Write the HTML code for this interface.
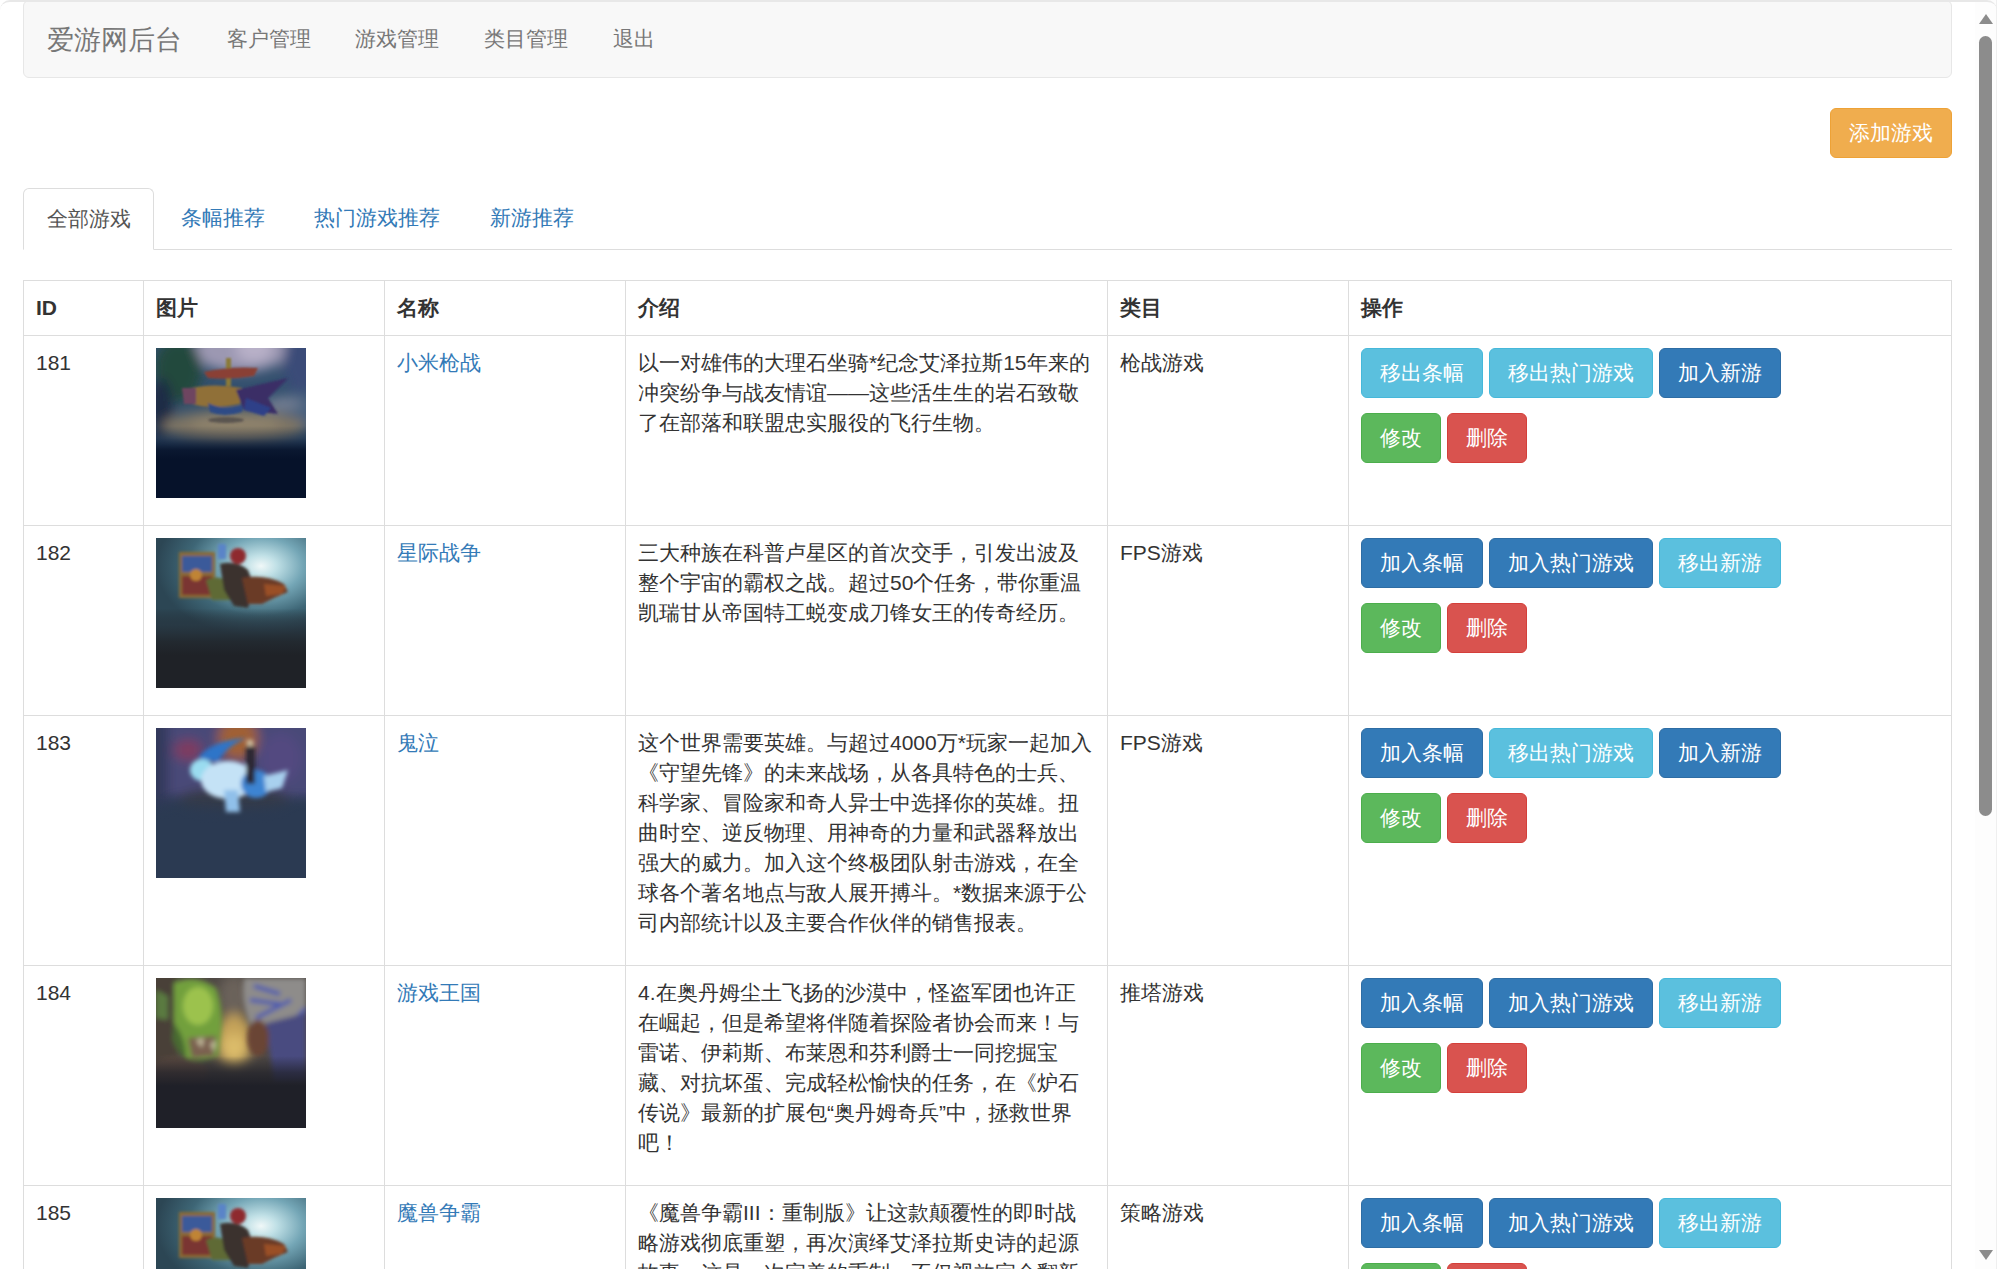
<!DOCTYPE html>
<html><head><meta charset="utf-8"><style>
html,body{margin:0;padding:0;background:#fff;overflow:hidden}
body{width:1997px;height:1269px;position:relative;font-family:"Liberation Sans",sans-serif;font-size:21px;line-height:30px;color:#333}
a{text-decoration:none;color:#337ab7}
.topline{position:absolute;left:0;top:0;width:1997px;height:40px;box-sizing:border-box;border-top:2px solid #e8e8e8;border-radius:10px 10px 0 0;z-index:5;pointer-events:none}
.navbar{position:absolute;left:23px;top:0;width:1927px;height:76px;background:#f8f8f8;border:1px solid #e7e7e7;border-radius:6px;box-sizing:content-box}
.brand{position:absolute;left:23px;top:24px;font-size:27px;line-height:30px;color:#777}
.nl{position:absolute;top:23px;font-size:21px;line-height:30px;color:#777}
.btn{display:inline-block;box-sizing:border-box;height:50px;padding:0 18px;border:1px solid;border-radius:6px;color:#fff;font-size:21px;line-height:48px;white-space:nowrap;vertical-align:top}
.warn{background:#f0ad4e;border-color:#eea236}
.info{background:#5bc0de;border-color:#46b8da}
.prim{background:#337ab7;border-color:#2e6da4}
.succ{background:#5cb85c;border-color:#4cae4c}
.dang{background:#d9534f;border-color:#d43f3a}
.addbtn{position:absolute;left:1830px;top:108px;width:122px}
.tabs{position:absolute;left:23px;top:249px;width:1929px;height:1px;background:#ddd}
.tab{position:absolute;top:188px;height:62px;box-sizing:border-box;line-height:30px;padding-top:15px;color:#337ab7}
.tab.act{background:#fff;border:1px solid #ddd;border-bottom-color:#fff;border-radius:6px 6px 0 0;color:#555}
table{position:absolute;left:23px;top:280px;border-collapse:collapse;table-layout:fixed;width:1929px}
td,th{border:1px solid #ddd;padding:12px;vertical-align:top;text-align:left;line-height:30px}
th{font-weight:bold}
td p{margin:0 0 15px 0;white-space:nowrap;overflow:visible}
.img{display:block;width:150px;height:150px;margin-bottom:15px}
.ops .btn{margin-right:6px}
.ops .r{height:50px;margin-bottom:15px;white-space:nowrap}
.sb{position:absolute;left:1975px;top:0;width:21px;height:1269px;background:#fdfdfd;border-right:1px solid #efefef}
.thumb{position:absolute;left:1979px;top:36px;width:13px;height:780px;border-radius:7px;background:#8c8c8c}
.arr{position:absolute;left:1979px;width:0;height:0;border-left:7px solid transparent;border-right:7px solid transparent}

</style></head><body>
<div class="navbar">
  <span class="brand">爱游网后台</span>
  <span class="nl" style="left:203px">客户管理</span>
  <span class="nl" style="left:331px">游戏管理</span>
  <span class="nl" style="left:460px">类目管理</span>
  <span class="nl" style="left:589px">退出</span>
</div>
<span class="btn warn addbtn">添加游戏</span>
<div class="tabs"></div>
<div class="tab act" style="left:23px;width:131px;padding-left:23px">全部游戏</div>
<div class="tab" style="left:157px;padding-left:24px">条幅推荐</div>
<div class="tab" style="left:290px;padding-left:24px">热门游戏推荐</div>
<div class="tab" style="left:466px;padding-left:24px">新游推荐</div>

<table>
<colgroup><col style="width:120px"><col style="width:241px"><col style="width:241px"><col style="width:482px"><col style="width:241px"><col style="width:603px"></colgroup>
<tr><th>ID</th><th>图片</th><th>名称</th><th>介绍</th><th>类目</th><th>操作</th></tr>
<tr><td>181</td><td><svg class="img" width="150" height="150" viewBox="0 0 150 150"><defs><filter id="b1" x="-30%" y="-30%" width="160%" height="160%"><feGaussianBlur stdDeviation="6"/></filter><filter id="s1" x="-20%" y="-20%" width="140%" height="140%"><feGaussianBlur stdDeviation="1.3"/></filter><linearGradient id="l1" x1="0" y1="0" x2="0" y2="1"><stop offset="0" stop-color="#06122a" stop-opacity="0"/><stop offset="0.52" stop-color="#06122a" stop-opacity="0"/><stop offset="0.6" stop-color="#06122a" stop-opacity="0.3"/><stop offset="0.68" stop-color="#06122a" stop-opacity="0.9"/><stop offset="0.74" stop-color="#06122a" stop-opacity="1"/><stop offset="1" stop-color="#06122a"/></linearGradient><clipPath id="c1"><rect width="150" height="150"/></clipPath></defs>
<g clip-path="url(#c1)">
<rect width="150" height="150" fill="#34506e"/>
<g filter="url(#b1)">
<ellipse cx="85" cy="2" rx="48" ry="22" fill="#9c98b2"/>
<ellipse cx="98" cy="0" rx="18" ry="14" fill="#b8b0c8"/>
<ellipse cx="145" cy="15" rx="18" ry="30" fill="#3a4c78"/>
<ellipse cx="140" cy="62" rx="30" ry="18" fill="#46607e"/>
<ellipse cx="22" cy="22" rx="24" ry="32" fill="#24483e"/>
<ellipse cx="5" cy="60" rx="12" ry="30" fill="#1c2c44"/>
<ellipse cx="78" cy="78" rx="72" ry="16" fill="#7e7464"/>
<ellipse cx="80" cy="76" rx="45" ry="9" fill="#8e826c"/>
<ellipse cx="125" cy="56" rx="22" ry="3" fill="#8e92a0"/>
</g>
<rect width="150" height="150" fill="url(#l1)"/>
<g filter="url(#s1)">
<rect x="70" y="10" width="5" height="28" fill="#8a7a38"/>
<path d="M48 24 Q75 18 102 20 L98 28 Q75 32 52 30 Z" fill="#8a4034"/>
<path d="M26 42 Q55 34 86 40 L84 56 Q55 62 36 56 Z" fill="#907038"/>
<path d="M52 55 Q70 64 88 56 L86 64 Q68 70 54 64 Z" fill="#2e4c86"/>
<path d="M80 42 L132 30 L112 50 L122 66 L88 62 Z" fill="#3a2e66"/>
<path d="M90 50 L115 60 L108 68 L88 62 Z" fill="#2e4088"/>
<path d="M26 40 L40 40 L40 56 L28 56 Z" fill="#6e4460"/>
<ellipse cx="70" cy="72" rx="18" ry="3" fill="#5a5450"/>
</g>
</g></svg></td><td><a>小米枪战</a></td><td><p>以一对雄伟的大理石坐骑*纪念艾泽拉斯15年来的<br>冲突纷争与战友情谊——这些活生生的岩石致敬<br>了在部落和联盟忠实服役的飞行生物。</p></td><td>枪战游戏</td>
<td class="ops"><div class="r"><span class="btn info">移出条幅</span><span class="btn info">移出热门游戏</span><span class="btn prim">加入新游</span></div><div class="r"><span class="btn succ">修改</span><span class="btn dang">删除</span></div></td></tr>
<tr><td>182</td><td><svg class="img" width="150" height="150" viewBox="0 0 150 150"><defs><filter id="s2" x="-20%" y="-20%" width="140%" height="140%"><feGaussianBlur stdDeviation="1.6"/></filter><filter id="b2" x="-30%" y="-30%" width="160%" height="160%"><feGaussianBlur stdDeviation="6"/></filter><radialGradient id="g2" cx="105" cy="28" r="95" gradientUnits="userSpaceOnUse" gradientTransform="translate(105 28) scale(1.1 0.75) translate(-105 -28)"><stop offset="0" stop-color="#f0f8f8"/><stop offset="0.15" stop-color="#c0e0e6"/><stop offset="0.4" stop-color="#74a6b6"/><stop offset="0.7" stop-color="#3e6676"/><stop offset="1" stop-color="#2c4654"/></radialGradient><linearGradient id="l2" x1="0" y1="0" x2="0" y2="1"><stop offset="0" stop-color="#1f2227" stop-opacity="0"/><stop offset="0.47" stop-color="#1f2227" stop-opacity="0"/><stop offset="0.58" stop-color="#26323c" stop-opacity="0.65"/><stop offset="0.69" stop-color="#22282e" stop-opacity="0.95"/><stop offset="0.78" stop-color="#1f2227" stop-opacity="1"/><stop offset="1" stop-color="#1f2227"/></linearGradient><clipPath id="c2"><rect width="150" height="150"/></clipPath></defs>
<g clip-path="url(#c2)">
<rect width="150" height="150" fill="url(#g2)"/>
<g filter="url(#s2)">
<rect x="23" y="14" width="36" height="46" fill="#8a6a34"/>
<rect x="26" y="18" width="30" height="16" fill="#3a5a9a"/>
<rect x="26" y="38" width="30" height="19" fill="#7a3430"/>
<circle cx="40" cy="37" r="6" fill="#c08434"/>
<rect x="62" y="6" width="8" height="15" fill="#5a84c8"/>
<circle cx="82" cy="18" r="8" fill="#8e2a2e"/>
<path d="M50 42 Q62 36 72 44 L74 62 L56 62 Z" fill="#5e6a34"/>
<path d="M64 26 Q80 22 92 32 L98 48 L92 70 L78 68 L68 52 Z" fill="#3a302e"/>
<path d="M86 40 Q110 36 128 46 L132 54 L118 60 L106 66 L92 66 Z" fill="#6a3a26"/>
<path d="M108 46 L130 48 L126 56 L110 58 Z" fill="#9a5028"/>
</g>
<rect width="150" height="150" fill="url(#l2)"/>
</g></svg></td><td><a>星际战争</a></td><td><p>三大种族在科普卢星区的首次交手，引发出波及<br>整个宇宙的霸权之战。超过50个任务，带你重温<br>凯瑞甘从帝国特工蜕变成刀锋女王的传奇经历。</p></td><td>FPS游戏</td>
<td class="ops"><div class="r"><span class="btn prim">加入条幅</span><span class="btn prim">加入热门游戏</span><span class="btn info">移出新游</span></div><div class="r"><span class="btn succ">修改</span><span class="btn dang">删除</span></div></td></tr>
<tr><td>183</td><td><svg class="img" width="150" height="150" viewBox="0 0 150 150"><defs><filter id="b3" x="-30%" y="-30%" width="160%" height="160%"><feGaussianBlur stdDeviation="6"/></filter><filter id="s3" x="-20%" y="-20%" width="140%" height="140%"><feGaussianBlur stdDeviation="2"/></filter><linearGradient id="l3" x1="0" y1="0" x2="0" y2="1"><stop offset="0" stop-color="#2b3a52" stop-opacity="0"/><stop offset="0.42" stop-color="#2b3a52" stop-opacity="0"/><stop offset="0.58" stop-color="#2b3a52" stop-opacity="0.85"/><stop offset="0.66" stop-color="#2b3a52" stop-opacity="1"/><stop offset="1" stop-color="#2b3a52"/></linearGradient><clipPath id="c3"><rect width="150" height="150"/></clipPath></defs>
<g clip-path="url(#c3)">
<rect width="150" height="150" fill="#2b3a52"/>
<g filter="url(#b3)">
<rect x="-10" y="-10" width="170" height="80" fill="#4a4878"/>
<rect x="-10" y="-10" width="22" height="90" fill="#30385a"/>
<ellipse cx="82" cy="10" rx="20" ry="22" fill="#a06034"/>
<ellipse cx="32" cy="22" rx="14" ry="10" fill="#803a5e"/>
<ellipse cx="125" cy="30" rx="20" ry="25" fill="#524a80"/>
<ellipse cx="78" cy="72" rx="56" ry="13" fill="#383a44"/>
</g>
<rect width="150" height="150" fill="url(#l3)"/>
<g filter="url(#s3)">
<path d="M42 30 Q55 12 92 10 Q72 16 62 34 Z" fill="#2e74c8"/>
<ellipse cx="46" cy="42" rx="12" ry="11" fill="#9adcf0"/>
<ellipse cx="72" cy="52" rx="27" ry="19" fill="#c4e2f6"/>
<ellipse cx="100" cy="56" rx="15" ry="14" fill="#3c84d2"/>
<path d="M108 48 L132 42 L126 60 L110 64 Z" fill="#a8d0ee"/>
<path d="M68 62 L82 62 L84 84 L70 84 Z" fill="#90c0ea"/>
<rect x="90" y="18" width="9" height="38" fill="#2a2630"/>
<circle cx="94" cy="15" r="3.5" fill="#d0c0a0"/>
</g>
</g></svg></td><td><a>鬼泣</a></td><td><p>这个世界需要英雄。与超过4000万*玩家一起加入<br>《守望先锋》的未来战场，从各具特色的士兵、<br>科学家、冒险家和奇人异士中选择你的英雄。扭<br>曲时空、逆反物理、用神奇的力量和武器释放出<br>强大的威力。加入这个终极团队射击游戏，在全<br>球各个著名地点与敌人展开搏斗。*数据来源于公<br>司内部统计以及主要合作伙伴的销售报表。</p></td><td>FPS游戏</td>
<td class="ops"><div class="r"><span class="btn prim">加入条幅</span><span class="btn info">移出热门游戏</span><span class="btn prim">加入新游</span></div><div class="r"><span class="btn succ">修改</span><span class="btn dang">删除</span></div></td></tr>
<tr><td>184</td><td><svg class="img" width="150" height="150" viewBox="0 0 150 150"><defs><filter id="b4" x="-30%" y="-30%" width="160%" height="160%"><feGaussianBlur stdDeviation="6"/></filter><filter id="s4" x="-20%" y="-20%" width="140%" height="140%"><feGaussianBlur stdDeviation="2.4"/></filter><linearGradient id="l4" x1="0" y1="0" x2="0" y2="1"><stop offset="0" stop-color="#1f2028" stop-opacity="0"/><stop offset="0.52" stop-color="#1f2028" stop-opacity="0"/><stop offset="0.63" stop-color="#1f2028" stop-opacity="0.7"/><stop offset="0.72" stop-color="#1f2028" stop-opacity="1"/><stop offset="1" stop-color="#1f2028"/></linearGradient><clipPath id="c4"><rect width="150" height="150"/></clipPath></defs>
<g clip-path="url(#c4)">
<rect width="150" height="150" fill="#4e4844"/>
<g filter="url(#b4)">
<ellipse cx="78" cy="18" rx="16" ry="22" fill="#6a625a"/>
<ellipse cx="78" cy="62" rx="20" ry="26" fill="#c4a258"/>
<ellipse cx="78" cy="70" rx="12" ry="14" fill="#dcbc6a"/>
</g>
<g filter="url(#s4)">
<rect x="-5" y="-5" width="26" height="110" fill="#4a4038"/>
<path d="M0 12 L12 18 L12 42 L0 40 Z" fill="#5a7a40"/>
<ellipse cx="20" cy="95" rx="32" ry="16" fill="#5a4a40"/>
<path d="M18 5 Q40 -5 60 10 Q68 30 65 55 L62 78 Q45 86 30 80 Q16 60 18 30 Z" fill="#72a03e"/>
<ellipse cx="42" cy="28" rx="15" ry="19" fill="#9cc24e"/>
<path d="M18 45 Q30 60 30 80 Q20 75 16 60 Z" fill="#4a6a30"/>
<path d="M32 60 L60 58 L58 78 L36 80 Z" fill="#7a6050"/>
<path d="M40 62 L48 60 L46 70 Z M54 66 L60 62 L58 74 Z" fill="#c8c0a0"/>
<path d="M88 0 L150 0 L150 45 Q120 40 96 52 Q84 25 88 0 Z" fill="#8e8c8a"/>
<path d="M98 8 L124 16 M94 22 L124 26 M100 40 L135 22 M122 60 L150 30" stroke="#4a58b0" stroke-width="4" fill="none"/>
<path d="M110 45 L150 35 L150 105 L118 105 Z" fill="#4a4c80"/>
<ellipse cx="102" cy="60" rx="11" ry="18" fill="#6a4434"/>
</g>
<rect width="150" height="150" fill="url(#l4)"/>
</g></svg></td><td><a>游戏王国</a></td><td><p>4.在奥丹姆尘土飞扬的沙漠中，怪盗军团也许正<br>在崛起，但是希望将伴随着探险者协会而来！与<br>雷诺、伊莉斯、布莱恩和芬利爵士一同挖掘宝<br>藏、对抗坏蛋、完成轻松愉快的任务，在《炉石<br>传说》最新的扩展包“奥丹姆奇兵”中，拯救世界<br>吧！</p></td><td>推塔游戏</td>
<td class="ops"><div class="r"><span class="btn prim">加入条幅</span><span class="btn prim">加入热门游戏</span><span class="btn info">移出新游</span></div><div class="r"><span class="btn succ">修改</span><span class="btn dang">删除</span></div></td></tr>
<tr><td>185</td><td><svg class="img" width="150" height="150" viewBox="0 0 150 150"><defs><filter id="s2b" x="-20%" y="-20%" width="140%" height="140%"><feGaussianBlur stdDeviation="1.6"/></filter><filter id="b2b" x="-30%" y="-30%" width="160%" height="160%"><feGaussianBlur stdDeviation="6"/></filter><radialGradient id="g2b" cx="105" cy="28" r="95" gradientUnits="userSpaceOnUse" gradientTransform="translate(105 28) scale(1.1 0.75) translate(-105 -28)"><stop offset="0" stop-color="#f0f8f8"/><stop offset="0.15" stop-color="#c0e0e6"/><stop offset="0.4" stop-color="#74a6b6"/><stop offset="0.7" stop-color="#3e6676"/><stop offset="1" stop-color="#2c4654"/></radialGradient><linearGradient id="l2b" x1="0" y1="0" x2="0" y2="1"><stop offset="0" stop-color="#1f2227" stop-opacity="0"/><stop offset="0.47" stop-color="#1f2227" stop-opacity="0"/><stop offset="0.58" stop-color="#26323c" stop-opacity="0.65"/><stop offset="0.69" stop-color="#22282e" stop-opacity="0.95"/><stop offset="0.78" stop-color="#1f2227" stop-opacity="1"/><stop offset="1" stop-color="#1f2227"/></linearGradient><clipPath id="c2b"><rect width="150" height="150"/></clipPath></defs>
<g clip-path="url(#c2b)">
<rect width="150" height="150" fill="url(#g2b)"/>
<g filter="url(#s2b)">
<rect x="23" y="14" width="36" height="46" fill="#8a6a34"/>
<rect x="26" y="18" width="30" height="16" fill="#3a5a9a"/>
<rect x="26" y="38" width="30" height="19" fill="#7a3430"/>
<circle cx="40" cy="37" r="6" fill="#c08434"/>
<rect x="62" y="6" width="8" height="15" fill="#5a84c8"/>
<circle cx="82" cy="18" r="8" fill="#8e2a2e"/>
<path d="M50 42 Q62 36 72 44 L74 62 L56 62 Z" fill="#5e6a34"/>
<path d="M64 26 Q80 22 92 32 L98 48 L92 70 L78 68 L68 52 Z" fill="#3a302e"/>
<path d="M86 40 Q110 36 128 46 L132 54 L118 60 L106 66 L92 66 Z" fill="#6a3a26"/>
<path d="M108 46 L130 48 L126 56 L110 58 Z" fill="#9a5028"/>
</g>
<rect width="150" height="150" fill="url(#l2b)"/>
</g></svg></td><td><a>魔兽争霸</a></td><td><p>《魔兽争霸III：重制版》让这款颠覆性的即时战<br>略游戏彻底重塑，再次演绎艾泽拉斯史诗的起源<br>故事。这是一次完美的重制，不仅视效完全翻新，</p></td><td>策略游戏</td>
<td class="ops"><div class="r"><span class="btn prim">加入条幅</span><span class="btn prim">加入热门游戏</span><span class="btn info">移出新游</span></div><div class="r"><span class="btn succ">修改</span><span class="btn dang">删除</span></div></td></tr>
</table>

<div class="sb"></div>
<div class="thumb"></div>
<div class="arr" style="top:14px;border-bottom:10px solid #8c8c8c"></div>
<div class="arr" style="top:1250px;border-top:10px solid #8c8c8c"></div>
<div class="topline"></div>
</body></html>
